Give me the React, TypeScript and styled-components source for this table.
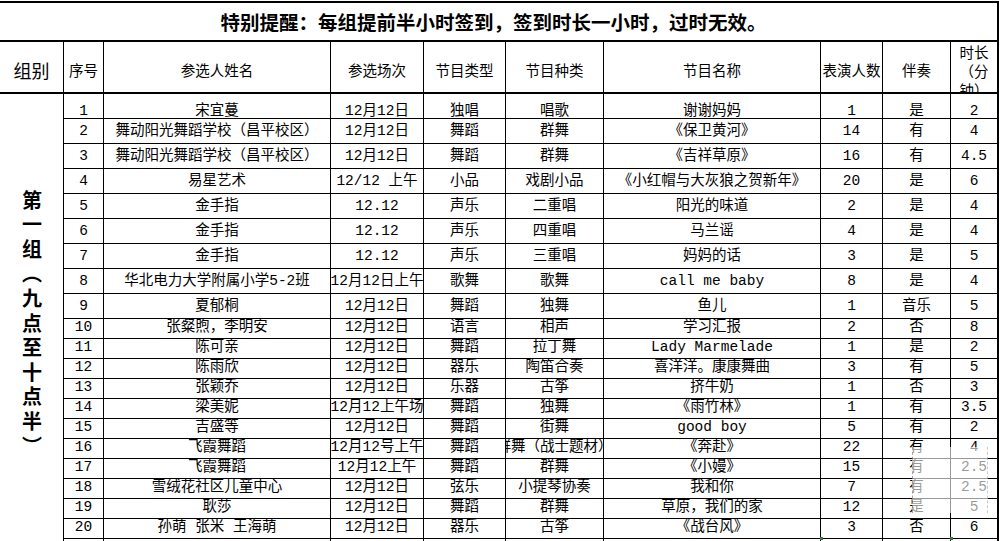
import React from "react";
import styled, { createGlobalStyle, css } from "styled-components";

const Global = createGlobalStyle`
  html, body { margin: 0; padding: 0; background: #fff; }
  body {
    font-family: "Liberation Mono", "Noto Sans CJK SC", monospace;
    color: #000;
  }
`;

const Page = styled.div`
  width: 1000px;
  height: 541px;
  overflow: hidden;
  background: #fff;
`;

const Sheet = styled.div`
  position: relative;
  display: grid;
  grid-template-columns: 64px 40px 227px 93px 82px 98px 217px 62px 68px 48px;
  grid-template-rows: 41px 52px repeat(9, 25px) repeat(12, 20px);
  width: 999px;
  padding-top: 1px;
`;

const Title = styled.div`
  grid-column: 1 / -1;
  grid-row: 1;
  display: flex;
  align-items: center;
  justify-content: center;
  padding-right: 10px;
  border-top: 2px solid #000;
  border-bottom: 2px solid #000;
  border-right: 2px solid #000;
  font-family: "Noto Sans CJK SC", sans-serif;
  font-weight: 700;
  font-size: 19.5px;
  line-height: 1;
  white-space: nowrap;
`;

const HeadCell = styled.div<{ $big?: boolean; $last?: boolean; $stack?: boolean }>`
  display: flex;
  align-items: center;
  justify-content: center;
  overflow: hidden;
  padding-top: 6px;
  border-right: ${(p) => (p.$last ? 2 : 1)}px solid #000;
  border-bottom: 2px solid #000;
  font-family: "Noto Sans CJK SC", sans-serif;
  font-size: ${(p) => (p.$big ? 18 : 14.5)}px;
  line-height: 1;
  white-space: nowrap;
  ${(p) =>
    p.$stack &&
    css`
      align-items: flex-start;
      padding-top: 0;
      line-height: 19px;
      text-align: center;
      white-space: normal;
    `}
`;

const GroupCell = styled.div`
  grid-column: 1;
  grid-row: 3 / span 21;
  display: flex;
  justify-content: center;
  align-items: flex-start;
  padding-top: 96px;
  border-right: 1px solid #000;
  overflow: hidden;
`;

const GroupLabel = styled.span`
  writing-mode: vertical-rl;
  text-orientation: mixed;
  font-family: "Noto Sans CJK SC", sans-serif;
  font-weight: 700;
  font-size: 20px;
  letter-spacing: 4.6px;
  line-height: 1;
`;

type Align = "bottom" | "center" | "raised";

const Cell = styled.div<{ $last?: boolean; $align: Align }>`
  display: flex;
  justify-content: center;
  align-items: ${(p) => (p.$align === "bottom" ? "flex-end" : "center")};
  padding-bottom: ${(p) => (p.$align === "raised" ? 3 : 0)}px;
  overflow: hidden;
  white-space: nowrap;
  border-right: ${(p) => (p.$last ? 2 : 1)}px solid #000;
  border-bottom: 1px solid #000;
  font-size: 14.5px;
  line-height: 1;
`;

const CellText = styled.span`
  flex: none;
`;

const Watermark = styled.div`
  position: absolute;
  left: 912px;
  top: 447px;
  width: 74px;
  height: 66px;
  background: rgba(255, 255, 255, 0.6);
  border-left: 1px dashed rgba(0, 0, 0, 0.35);
  border-right: 1px dashed rgba(0, 0, 0, 0.2);
  pointer-events: none;
`;

const Handle = styled.div<{ $x: number }>`
  position: absolute;
  top: 537px;
  left: ${(p) => p.$x}px;
  width: 3px;
  height: 3px;
  background: #1f8a2c;
`;

const headers: { label: React.ReactNode; big?: boolean; stack?: boolean }[] = [
  { label: "组别", big: true },
  { label: "序号" },
  { label: "参选人姓名" },
  { label: "参选场次" },
  { label: "节目类型" },
  { label: "节目种类" },
  { label: "节目名称" },
  { label: "表演人数" },
  { label: "伴奏" },
  {
    label: (
      <>
        时长
        <br />
        （分
        <br />
        钟）
      </>
    ),
    stack: true,
  },
];

type Row = [string, string, string, string, string, string, string, string, string];

const rows: Row[] = [
  ["1", "宋宜蔓", "12月12日", "独唱", "唱歌", "谢谢妈妈", "1", "是", "2"],
  ["2", "舞动阳光舞蹈学校（昌平校区）", "12月12日", "舞蹈", "群舞", "《保卫黄河》", "14", "有", "4"],
  ["3", "舞动阳光舞蹈学校（昌平校区）", "12月12日", "舞蹈", "群舞", "《吉祥草原》", "16", "有", "4.5"],
  ["4", "易星艺术", "12/12 上午", "小品", "戏剧小品", "《小红帽与大灰狼之贺新年》", "20", "是", "6"],
  ["5", "金手指", "12.12", "声乐", "二重唱", "阳光的味道", "2", "是", "4"],
  ["6", "金手指", "12.12", "声乐", "四重唱", "马兰谣", "4", "是", "4"],
  ["7", "金手指", "12.12", "声乐", "三重唱", "妈妈的话", "3", "是", "5"],
  ["8", "华北电力大学附属小学5-2班", "12月12日上午", "歌舞", "歌舞", "call me baby", "8", "是", "4"],
  ["9", "夏郁桐", "12月12日", "舞蹈", "独舞", "鱼儿", "1", "音乐", "5"],
  ["10", "张粲煦，李明安", "12月12日", "语言", "相声", "学习汇报", "2", "否", "8"],
  ["11", "陈可亲", "12月12日", "舞蹈", "拉丁舞", "Lady Marmelade", "1", "是", "2"],
  ["12", "陈雨欣", "12月12日", "器乐", "陶笛合奏", "喜洋洋。康康舞曲", "3", "有", "5"],
  ["13", "张颖乔", "12月12日", "乐器", "古筝", "挤牛奶", "1", "否", "3"],
  ["14", "梁美妮", "12月12上午场", "舞蹈", "独舞", "《雨竹林》", "1", "有", "3.5"],
  ["15", "吉盛等", "12月12日", "舞蹈", "街舞", "good boy", "5", "有", "2"],
  ["16", "飞霞舞蹈", "12月12号上午", "舞蹈", "群舞（战士题材）", "《奔赴》", "22", "有", "4"],
  ["17", "飞霞舞蹈", "12月12上午", "舞蹈", "群舞", "《小嫚》", "15", "有", "2.5"],
  ["18", "雪绒花社区儿童中心", "12月12日", "弦乐", "小提琴协奏", "我和你", "7", "有", "2.5"],
  ["19", "耿莎", "12月12日", "舞蹈", "群舞", "草原，我们的家", "12", "是", "5"],
  ["20", "孙萌 张米 王海萌", "12月12日", "器乐", "古筝", "《战台风》", "3", "否", "6"],
  ["", "", "", "", "", "", "", "", ""],
];

export default function App() {
  return (
    <>
      <Global />
      <Page>
        <Sheet>
          <GroupCell>
            <GroupLabel>第一组（九点至十点半）</GroupLabel>
          </GroupCell>
          <Title>特别提醒：每组提前半小时签到，签到时长一小时，过时无效。</Title>
          {headers.map((h, i) => (
            <HeadCell key={i} $big={h.big} $stack={h.stack} $last={i === headers.length - 1}>
              <span>{h.label}</span>
            </HeadCell>
          ))}
          {rows.map((r, ri) => {
            const align: Align = ri === 0 ? "bottom" : ri < 9 ? "center" : "raised";
            return r.map((v, ci) => (
              <Cell key={`${ri}-${ci}`} $align={align} $last={ci === r.length - 1}>
                <CellText>{v}</CellText>
              </Cell>
            ));
          })}
          <Watermark />
          <Handle $x={820} />
          <Handle $x={950} />
        </Sheet>
      </Page>
    </>
  );
}
